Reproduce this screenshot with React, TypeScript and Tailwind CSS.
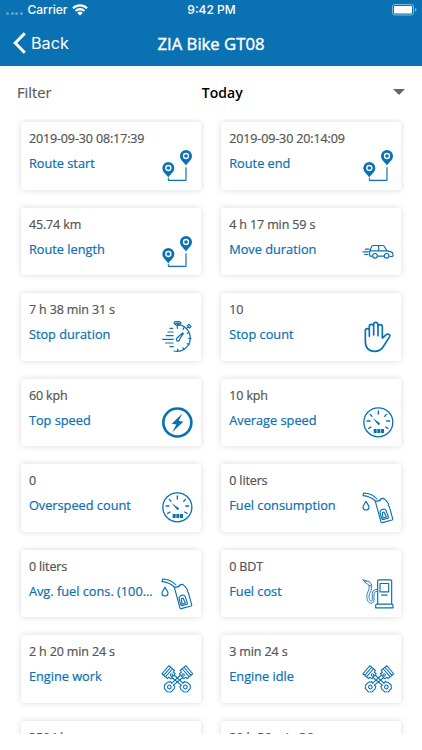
import type { ReactNode } from 'react';

type IconName = 'route' | 'car' | 'stopwatch' | 'hand' | 'bolt' | 'gauge' | 'nozzle' | 'pump' | 'pistons';

interface Stat {
  value: string;
  label: string;
  icon: IconName;
}

const STATS: Stat[] = [
  { value: '2019-09-30 08:17:39', label: 'Route start', icon: 'route' },
  { value: '2019-09-30 20:14:09', label: 'Route end', icon: 'route' },
  { value: '45.74 km', label: 'Route length', icon: 'route' },
  { value: '4 h 17 min 59 s', label: 'Move duration', icon: 'car' },
  { value: '7 h 38 min 31 s', label: 'Stop duration', icon: 'stopwatch' },
  { value: '10', label: 'Stop count', icon: 'hand' },
  { value: '60 kph', label: 'Top speed', icon: 'bolt' },
  { value: '10 kph', label: 'Average speed', icon: 'gauge' },
  { value: '0', label: 'Overspeed count', icon: 'gauge' },
  { value: '0 liters', label: 'Fuel consumption', icon: 'nozzle' },
  { value: '0 liters', label: 'Avg. fuel cons. (100...', icon: 'nozzle' },
  { value: '0 BDT', label: 'Fuel cost', icon: 'pump' },
  { value: '2 h 20 min 24 s', label: 'Engine work', icon: 'pistons' },
  { value: '3 min 24 s', label: 'Engine idle', icon: 'pistons' },
  { value: '3504 km', label: 'Odometer', icon: 'gauge' },
  { value: '20 h 56 min 36 s', label: 'Engine hours', icon: 'pistons' },
];

function Pin({ x, y }: { x: number; y: number }) {
  return (
    <g transform={`translate(${x} ${y})`} stroke="none">
      <path d="M0 29C-4 20-18 13-18 0a18 18 0 0 1 36 0C18 13 4 20 0 29Z" fill="#0a71b2" />
      <circle r="7.5" fill="none" stroke="#fff" strokeWidth="4" />
    </g>
  );
}

function Piston() {
  return (
    <g>
      <path d="M-16-79h32v22h-6v8h-20v-8h-6ZM-16-72h32M-16-65h32" />
      <circle cy="-55" r="3.5" />
      <path d="M-5-48-4-13M5-48 4-13" />
      <path d="M-4-13h-6l-4 7v13l7 7H7l7-7V-6l-4-7H4" />
      <circle r="5.5" />
    </g>
  );
}

const ICONS: Record<IconName, { box: string; width: number; art: ReactNode }> = {
  route: {
    box: '38 30 93 93',
    width: 3.5,
    art: (
      <>
        <Pin x={110} y={48} />
        <Pin x={57} y={84} />
        <path d="M57 116v3q0 2 2 2h49q2 0 2-2V83" />
      </>
    ),
  },
  car: {
    box: '39 31.5 93 93',
    width: 3.5,
    art: (
      <>
        <path d="M67 92h-6q-2 0-2-3V77l6-14q1-3 5-3h27q4 0 6 3l8 13 12 3q6 2 6 7v4q0 3-3 3h-7M83 92h19M59 76h52M86 60v16" />
        <circle cx="75" cy="91" r="7" />
        <circle cx="110" cy="91" r="7" />
        <path d="M46 71h11M39 79h16M44 87h10" />
      </>
    ),
  },
  stopwatch: {
    box: '37 33 93 93',
    width: 3.6,
    art: (
      <>
        <path d="M83 44a40 40 0 1 1-10 79" />
        <path d="M76 35h14l4 4-7 7h-7l-7-7ZM79 40h9" />
        <path d="m110 56 4-4M113 47l5-4 6 6-5 5Z" />
        <path d="m82 84 17-15 2 2-11 16a5 5 0 1 1-8-3Z" />
        <path d="M83 49v6M103 53l-3 5M118 67l-5 3M124 85h-7M118 104l-5-3M103 119l-3-6M84 124v-7" />
        <path d="M61 55h8M55 66h15M50 77h20M39 88h32M48 99h22M61 110h10" />
      </>
    ),
  },
  hand: {
    box: '39 33 93 93',
    width: 5,
    art: (
      <path d="M58 79V62q0-6-6-6t-6 6v32c0 20 11 30 28 30 14 0 21-5 27-16l18-28c3-5-4-10-9-7L97 84V50q0-6-6-6t-7 6v27M58 77V49q0-6 6-6t7 6v26M71 73V43q0-6 6-6t7 6v32" />
    ),
  },
  bolt: {
    box: '36 34.5 93 93',
    width: 8,
    art: (
      <>
        <circle cx="82" cy="81" r="42" />
        <path d="M97 54 65 85l14 2-12 23 33-31-14-3Z" fill="#0a71b2" stroke="none" />
      </>
    ),
  },
  gauge: {
    box: '36 291 93 93',
    width: 4,
    art: (
      <>
        <circle cx="82" cy="337" r="43.5" />
        <path d="M82 303v9M58 313l5 6M106 313l-5 6M48 333h9M107 333h9M53 355l7-4M111 355l-7-4" />
        <path d="m65 324 21 15q2 3-1 5t-5-1Z" fill="#0a71b2" stroke="none" />
        <path d="M68 357h9v12h-9ZM79 357h9v12h-9ZM90 357h9v12h-9Z" fill="#0a71b2" stroke="none" />
      </>
    ),
  },
  nozzle: {
    box: '39 291 93 93',
    width: 3.4,
    art: (
      <>
        <path d="M48 319c-3 7-9 11-9 17a9 9 0 0 0 18 0c0-6-6-10-9-17Z" />
        <path d="M81 312C69 298 57 295 41 294l-2 8c14 1 25 5 37 16" />
        <path d="m76 319 17 62q1 3 4 2l29-8q3-1 2-4l-10-36-3-3 1-5-8-11-7-6-8 1-3 6-13 2ZM85 317l6-3" />
        <path d="m95 371-5-19q0-6 5-8l7-2q4 0 6 4l7 20q1 3-3 4l-13 4q-3 0-4-3ZM99 370l-2-17 5-2 7 15Z" />
      </>
    ),
  },
  pump: {
    box: '39 22.5 93 93',
    width: 3.5,
    art: (
      <>
        <path d="M83 101V31q0-3 3-3h36q3 0 3 3v70M77 112v-7q0-4 4-4h44q4 0 4 4v7Z" />
        <path d="M90 39h26v25H90ZM95 74h16" />
        <path
          d="m39 28 10 3 9 2 7 10-5 4-11-9ZM49 31l-4 6M57 45c5 14-12 24-5 42 4 16 20 14 20 1V70q0-5 6-7h5M64 44c6 16-11 25-6 40 2 10 9 11 9 2V69q0-10 10-12h6"
          strokeWidth="2.6"
        />
      </>
    ),
  },
  pistons: {
    box: '37 280 93 93',
    width: 3.2,
    art: (
      <>
        <g transform="translate(107 352) rotate(-49)">
          <Piston />
        </g>
        <g transform="translate(59 352) rotate(49)">
          <Piston />
        </g>
      </>
    ),
  },
};

function StatIcon({ name }: { name: IconName }) {
  const { box, width, art } = ICONS[name];
  return (
    <svg
      viewBox={box}
      className="h-[31px] w-[31px] shrink-0 self-end overflow-visible"
      fill="none"
      stroke="#0a71b2"
      strokeWidth={width}
      strokeLinecap="round"
      strokeLinejoin="round"
    >
      {art}
    </svg>
  );
}

function StatCard({ value, label, icon }: Stat) {
  return (
    <div className="flex h-[67.5px] justify-between rounded-[3px] bg-white pt-[7.4px] pr-[7.5px] pb-[8.5px] pl-[8.4px] shadow-[0_0_6px_rgba(0,0,0,0.15)]">
      <div className="flex w-[123px] flex-col leading-[19px] whitespace-nowrap [-webkit-text-stroke:0.22px_currentColor]">
        <span className="text-[12.5px] tracking-[-0.13px] text-[#555]">{value}</span>
        <span className="mt-1.5 text-[12.75px] text-[#0a71b2]">{label}</span>
      </div>
      <StatIcon name={icon} />
    </div>
  );
}

function StatusBar() {
  return (
    <div className="grid h-5 grid-cols-3 items-center pr-[5px] pl-[6px] font-['Inter',sans-serif] text-[12px] font-medium">
      <div className="flex items-center">
        <div className="mt-[7px] flex gap-[1.5px]">
          {[0, 1, 2, 3].map(dot => (
            <span key={dot} className="h-[3px] w-[3px] rounded-full bg-white/35" />
          ))}
        </div>
        <span className="ml-[5px]">Carrier</span>
        <svg viewBox="0 0 16 12" className="ml-[5px] h-3 w-4" fill="none" stroke="#fff" strokeWidth="2.2">
          <path d="M1 4.3a10 10 0 0 1 14 0M3.6 7a6.2 6.2 0 0 1 8.8 0" />
          <path d="M8 11.6 5.3 8.9a3.8 3.8 0 0 1 5.4 0Z" fill="#fff" stroke="none" />
        </svg>
      </div>
      <span className="text-center">9:42 PM</span>
      <svg viewBox="0 0 25 12" className="h-3 w-[25px] justify-self-end">
        <rect x="0.5" y="0.5" width="21" height="10.5" rx="2.5" fill="none" stroke="#fff" strokeOpacity="0.5" />
        <rect x="2" y="2" width="18" height="7.5" rx="1" fill="#fff" />
        <path d="M23 4v3.5q1.5-.5 1.5-1.75T23 4Z" fill="#fff" fillOpacity="0.5" />
      </svg>
    </div>
  );
}

export default function App() {
  return (
    <div className="h-[750px] w-[422px] overflow-hidden bg-white font-['Open_Sans',sans-serif]">
      <header className="h-[65.5px] bg-[#0a71b2] text-white">
        <StatusBar />
        <div className="grid h-[47px] grid-cols-3 items-center px-[13px]">
          <button className="flex items-center gap-[5px] font-['Inter',sans-serif] text-[16.2px]">
            <svg viewBox="0 0 13 22" className="h-[22px] w-[13px]" fill="none" stroke="#fff" strokeWidth="3">
              <path d="M11.8 1.2 2.2 11l9.6 9.8" />
            </svg>
            Back
          </button>
          <h1 className="text-center text-[16.7px] whitespace-nowrap [-webkit-text-stroke:0.4px_currentColor]">
            ZIA Bike GT08
          </h1>
        </div>
      </header>

      <div className="flex h-[53px] items-center justify-between px-[17px] text-[14.7px]">
        <span className="text-[#5a5a5a] [-webkit-text-stroke:0.2px_currentColor]">Filter</span>
        <span className="text-[14px] font-semibold text-black">Today</span>
        <svg viewBox="0 0 12 6" className="h-[6px] w-3">
          <path d="M0 0h12L6 6Z" fill="#666" />
        </svg>
      </div>

      <main className="grid h-[615.5px] grid-cols-2 content-start gap-x-5 gap-y-[18px] overflow-hidden pt-[3.5px] pr-[20.8px] pl-[20.5px]">
        {STATS.map(stat => (
          <StatCard key={stat.label} {...stat} />
        ))}
      </main>
    </div>
  );
}
